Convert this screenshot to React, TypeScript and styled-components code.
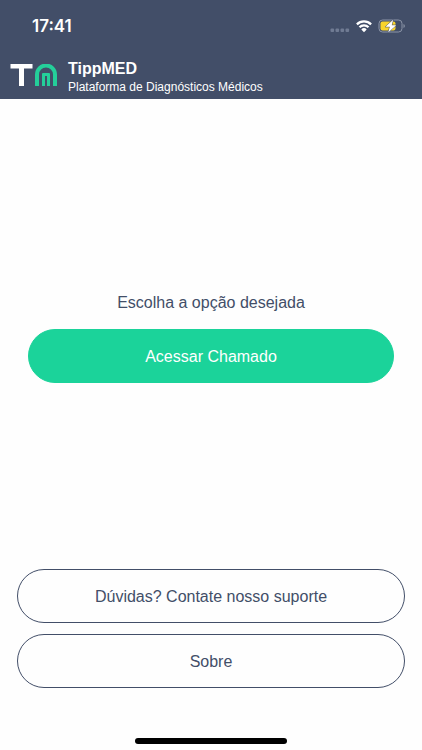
import React from "react";
import styled, { createGlobalStyle } from "styled-components";

const GlobalStyle = createGlobalStyle`
  *, *::before, *::after { box-sizing: border-box; }
  body {
    margin: 0;
    background: #fefefe;
    color: #424e68;
    font-family: "Liberation Sans", Arial, Helvetica, sans-serif;
  }
`;

const Screen = styled.div`
  display: flex;
  flex-direction: column;
  min-height: 100vh;
`;

const Header = styled.header`
  background: #424e68;
  color: #ffffff;
`;

const StatusBar = styled.div`
  display: flex;
  align-items: center;
  justify-content: space-between;
  height: 52px;
  padding: 0 16px 0 32px;
`;

const Clock = styled.time`
  font-family: Inter, sans-serif;
  font-size: 17px;
  line-height: 20px;
  font-weight: 600;
`;

const StatusIcons = styled.div`
  display: flex;
  align-items: center;
  gap: 6px;
`;

const Brand = styled.div`
  display: flex;
  align-items: center;
  gap: 10px;
  height: 47px;
  padding: 0 10px;
`;

const BrandText = styled.div`
  display: flex;
  flex-direction: column;
  gap: 1px;
  padding-top: 4px;
`;

const BrandName = styled.h1`
  margin: 0;
  font-size: 16px;
  line-height: 18px;
  font-weight: 700;
`;

const Tagline = styled.p`
  margin: 0;
  font-size: 12px;
  line-height: 16px;
`;

const Main = styled.main`
  flex: 1;
  display: flex;
  flex-direction: column;
  justify-content: center;
  gap: 16px;
  padding: 8px 28px 0;
`;

const Prompt = styled.p`
  margin: 0;
  font-size: 16px;
  line-height: 20px;
  text-align: center;
`;

const PillButton = styled.button<{ $filled?: boolean }>`
  width: 100%;
  height: 54px;
  padding: 2px 16px 0;
  border: 1px solid ${(p) => (p.$filled ? "#1bd39a" : "#424e68")};
  border-radius: 27px;
  background: ${(p) => (p.$filled ? "#1bd39a" : "transparent")};
  color: ${(p) => (p.$filled ? "#ffffff" : "#424e68")};
  font-family: inherit;
  font-size: 16px;
  line-height: 20px;
  cursor: pointer;
`;

const Footer = styled.footer`
  display: flex;
  flex-direction: column;
  gap: 11px;
  padding: 0 17px 50px;
`;

const HomeIndicator = styled.div`
  width: 36%;
  height: 6px;
  margin: 0 auto 6px;
  border-radius: 3px;
  background: #000000;
`;

const SignalIcon = () => (
  <svg width="20" height="14" viewBox="0 0 20 14" aria-hidden="true">
    {[0, 5, 10, 15].map((x) => (
      <rect key={x} x={x + 0.5} y="9.5" width="3.6" height="3.5" rx="1" fill="#707b93" />
    ))}
  </svg>
);

const WifiIcon = () => (
  <svg width="16" height="14" viewBox="0 0 16 14" aria-hidden="true">
    <g fill="none" stroke="#ffffff" strokeWidth="2.3">
      <path d="M.9 5.3a10.2 10.2 0 0 1 14.2 0" />
      <path d="M3.5 8.3a6.4 6.4 0 0 1 9 0" />
    </g>
    <path d="M8 13.2 5.3 10.4a3.9 3.9 0 0 1 5.4 0Z" fill="#ffffff" />
  </svg>
);

const BatteryIcon = () => (
  <svg width="28" height="14" viewBox="0 0 28 14" aria-hidden="true">
    <rect x="1" y="1" width="23" height="12" rx="3.5" fill="none" stroke="#8c95a8" />
    <path d="M25.5 5c1.8.6 1.8 3.4 0 4Z" fill="#8c95a8" />
    <rect x="2.5" y="2.5" width="15" height="9" rx="2" fill="#f8d32b" />
    <path
      d="M15.2.7 7.4 7.8h4.4L10.2 13.4l8-7.2h-4.5Z"
      fill="#ffffff"
      stroke="#424e68"
      strokeWidth="1"
      paintOrder="stroke"
    />
  </svg>
);

const Logo = () => (
  <svg width="48" height="23" viewBox="0 1 48 23" role="img" aria-label="TippMED">
    <path d="M.5 1H22.5v4.5H14V23H9V5.5H.5Z" fill="#ffffff" />
    <path
      d="M27 23V11.5a9 9 0 0 1 18 0V23"
      fill="none"
      stroke="#24cf9a"
      strokeWidth="4"
    />
    <path d="M32 23V11a1 1 0 0 1 1-1h6a1 1 0 0 1 1 1V23h-3V13h-2V23Z" fill="#24cf9a" />
  </svg>
);

export default function App() {
  return (
    <Screen>
      <GlobalStyle />
      <Header>
        <StatusBar>
          <Clock>17:41</Clock>
          <StatusIcons>
            <SignalIcon />
            <WifiIcon />
            <BatteryIcon />
          </StatusIcons>
        </StatusBar>
        <Brand>
          <Logo />
          <BrandText>
            <BrandName>TippMED</BrandName>
            <Tagline>Plataforma de Diagnósticos Médicos</Tagline>
          </BrandText>
        </Brand>
      </Header>
      <Main>
        <Prompt>Escolha a opção desejada</Prompt>
        <PillButton type="button" $filled>
          Acessar Chamado
        </PillButton>
      </Main>
      <Footer>
        <PillButton type="button">Dúvidas? Contate nosso suporte</PillButton>
        <PillButton type="button">Sobre</PillButton>
      </Footer>
      <HomeIndicator />
    </Screen>
  );
}
